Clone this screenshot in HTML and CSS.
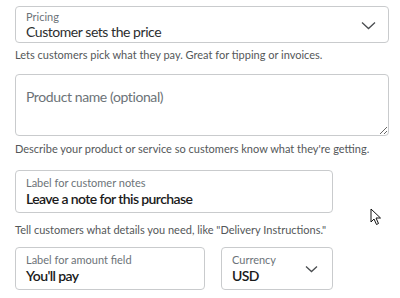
FILE: index.html
```html
<!doctype html>
<html lang="en">
  <head>
    <meta charset="UTF-8" />
    <meta name="viewport" content="width=device-width, initial-scale=1.0" />
    <title>Customer sets the price</title>
    <link rel="stylesheet" href="styles.css">
  </head>
  <body>
    <main class="form">
      <!-- Pricing select -->
      <div class="field field-select field-pricing">
        <div class="field-text">
          <span class="field-label">Pricing</span>
          <span class="field-value">Customer sets the price</span>
        </div>
        <svg class="chevron" width="15" height="9" viewBox="0 0 15 9">
          <path d="M1 1.5 L7.5 7.5 L14 1.5" fill="none" stroke="#4a4d50" stroke-width="1.3" />
        </svg>
      </div>
      <p class="help help-pricing">Lets customers pick what they pay. Great for tipping or invoices.</p>

      <!-- Product name -->
      <textarea class="product-name" placeholder="Product name (optional)"></textarea>
      <p class="help help-product">Describe your product or service so customers know what they're getting.</p>

      <!-- Customer notes -->
      <div class="field field-notes">
        <div class="field-text">
          <span class="field-label">Label for customer notes</span>
          <span class="field-value">Leave a note for this purchase</span>
        </div>
      </div>
      <p class="help help-notes">Tell customers what details you need, like "Delivery Instructions."</p>

      <!-- Amount row -->
      <div class="amount-row">
        <div class="field field-amount">
          <div class="field-text">
            <span class="field-label">Label for amount field</span>
            <span class="field-value">You'll pay</span>
          </div>
        </div>
        <div class="field field-select field-currency">
          <div class="field-text">
            <span class="field-label">Currency</span>
            <span class="field-value">USD</span>
          </div>
          <svg class="chevron" width="13" height="8" viewBox="0 0 13 8">
            <path d="M1 1.5 L6.5 6.5 L12 1.5" fill="none" stroke="#4a4d50" stroke-width="1.3" />
          </svg>
        </div>
      </div>
    </main>

    <!-- mouse pointer -->
    <svg class="pointer" width="12" height="18" viewBox="0 0 12 18">
      <path d="M1 1 L1 14 L4 11 L6.5 16.5 L8.5 15.5 L6 10 L10.5 10 Z" fill="#fff" stroke="#111" stroke-width="1" stroke-linejoin="round" />
    </svg>
  </body>
</html>
```

FILE: styles.css
```css
/* Reset and general styles */
* {
  margin: 0;
  padding: 0;
  box-sizing: border-box;
}

body {
  background-color: #ffffff;
  font-family: "Lato", "Open Sans", sans-serif;
  color: #2c2e2f;
  position: relative;
  overflow: hidden;
}

/* Form layout */
.form {
  padding: 6px 11px 0 15px;
  display: flex;
  flex-direction: column;
}

.field {
  border: 1px solid #c9cbcd;
  border-radius: 4px;
  background-color: white;
  display: flex;
  align-items: center;
  padding: 0 10px;
}

.field-text {
  display: flex;
  flex-direction: column;
  flex: 1;
}

.field-label {
  font-size: 11px;
  line-height: 14px;
  color: #6c7378;
}

.field-value {
  font-size: 14px;
  line-height: 18px;
  letter-spacing: -0.45px;
  color: #2c2e2f;
}

.field-pricing {
  width: 374px;
  height: 37px;
  padding-top: 1px;
}

.field-pricing .field-label {
  line-height: 13px;
}

.field-pricing .chevron {
  margin-right: 2px;
}

.field-notes,
.field-amount,
.field-currency {
  height: 43px;
}

.field-notes {
  width: 318px;
}

.field-notes .field-value,
.field-amount .field-value,
.field-currency .field-value {
  font-weight: 600;
  letter-spacing: -0.6px;
  color: #1a1a1a;
}

.help {
  font-size: 11px;
  line-height: 14px;
  color: #545759;
}

.help-pricing {
  margin: 5px 0 12px;
}

.help-product {
  margin: 6px 0 14px;
}

.help-notes {
  margin: 10px 0 10px;
}

/* Product name textarea */
.product-name {
  width: 374px;
  height: 62px;
  border: 1px solid #c9cbcd;
  border-radius: 4px;
  padding: 13px 10px;
  font-family: "Lato", "Open Sans", sans-serif;
  font-size: 14px;
  letter-spacing: -0.4px;
  color: #2c2e2f;
  resize: vertical;
  outline: none;
}

.product-name::placeholder {
  color: #6c7378;
}

/* Amount row */
.amount-row {
  display: flex;
  gap: 16px;
}

.field-amount {
  width: 190px;
}

.field-currency {
  width: 112px;
  padding-right: 14px;
}

/* Mouse pointer overlay */
.pointer {
  position: absolute;
  left: 370px;
  top: 208px;
}
```
